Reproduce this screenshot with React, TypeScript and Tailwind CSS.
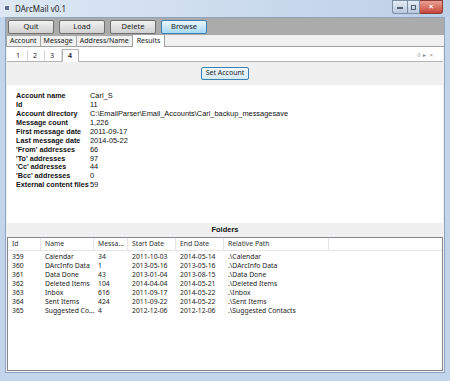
import React from "react";

const seg = { fontFamily: '"Noto Sans", "Open Sans", sans-serif' };
const ms = { fontFamily: '"Liberation Sans", Arial, sans-serif' };

const details: [string, string][] = [
  ["Account name", "Carl_S"],
  ["Id", "11"],
  ["Account directory", "C:\\EmailParser\\Email_Accounts\\Carl_backup_messagesave"],
  ["Message count", "1,226"],
  ["First message date", "2011-09-17"],
  ["Last message date", "2014-05-22"],
  ["'From' addresses", "66"],
  ["'To' addresses", "97"],
  ["'Cc' addresses", "44"],
  ["'Bcc' addresses", "0"],
  ["External content files", "59"],
];

const rows: string[][] = [
  ["359", "Calendar", "34", "2011-10-03", "2014-05-14", ".\\Calendar"],
  ["360", "DArcInfo Data", "1", "2013-05-16", "2013-05-16", ".\\DArcInfo Data"],
  ["361", "Data Done", "43", "2013-01-04", "2013-08-15", ".\\Data Done"],
  ["362", "Deleted Items", "104", "2014-04-04", "2014-05-21", ".\\Deleted Items"],
  ["363", "Inbox", "616", "2011-09-17", "2014-05-22", ".\\Inbox"],
  ["364", "Sent Items", "424", "2011-09-22", "2014-05-22", ".\\Sent Items"],
  ["365", "Suggested Co...", "4", "2012-12-06", "2012-12-06", ".\\Suggested Contacts"],
];

const cols = ["w-[33px]", "w-[53px]", "w-[34px]", "w-[48px]", "w-[48px]", "w-[105px]"];

function Btn({ label, active }: { label: string; active?: boolean }) {
  return (
    <div
      className={
        "w-[46px] h-[14px] flex items-center justify-center rounded-[2px] border text-[7.5px] text-[#222] " +
        (active
          ? "border-[#3c7fb1] bg-gradient-to-b from-[#eaf6fd] to-[#a7d9f5]"
          : "border-[#707070] bg-gradient-to-b from-[#f2f2f2] to-[#d0d0d0]")
      }
      style={seg}
    >
      {label}
    </div>
  );
}

export default function App() {
  return (
    <div className="w-[450px] h-[381px] overflow-hidden bg-[#c2d5eb] flex flex-col">
      {/* title bar */}
      <div className="h-[17px] flex items-start relative bg-gradient-to-r from-[#dde8f4] via-[#cddcee] to-[#bcd0e8]">
        <div className="mt-[5px] ml-[4px] w-[6px] h-[6px] bg-[#5a6d84] border border-[#e8eef6]" />
        <div className="ml-[5px] mt-[3px] text-[8px] text-[#1e1e1e]" style={seg}>
          DArcMail v0.1
        </div>
        <div className="ml-auto mr-[7px] flex h-[14px]">
          <div className="w-[15px] h-[14px] rounded-bl-[3px] border border-[#7f8fa3] border-r-0 bg-gradient-to-b from-[#e4ecf6] to-[#b7c8de] flex items-end justify-center pb-[4px]">
            <div className="w-[6px] h-[2px] bg-[#56616e]" />
          </div>
          <div className="w-[13px] h-[14px] border border-[#7f8fa3] bg-gradient-to-b from-[#e4ecf6] to-[#b7c8de] flex items-center justify-center">
            <div className="w-[5px] h-[5px] border border-[#56616e]" />
          </div>
          <div className="w-[23px] h-[14px] rounded-br-[3px] border border-[#8a3b33] border-l-0 bg-gradient-to-b from-[#e8a093] to-[#c7433a] flex items-center justify-center text-[8px] font-bold text-white" style={ms}>
            ×
          </div>
        </div>
      </div>

      {/* client */}
      <div className="mx-[5px] flex-1 flex flex-col bg-[#f0f0f0] border border-[#8ea3bd] min-h-0">
        {/* toolbar */}
        <div className="h-[17px] bg-[#ababab] flex items-center gap-[5px] pl-[2px] shrink-0">
          <Btn label="Quit" />
          <Btn label="Load" />
          <Btn label="Delete" />
          <Btn label="Browse" active />
        </div>
        {/* main tabs */}
        <div className="h-[12px] flex items-end pl-0 shrink-0 border-b border-[#a0a0a0] relative" style={seg}>
          {["Account", "Message", "Address/Name"].map((t) => (
            <div key={t} className="h-[11px] px-[3px] border border-b-0 border-[#a8a8a8] -ml-px first:ml-0 bg-[#f0f0f0] text-[7px] leading-[10px] text-[#222]">
              {t}
            </div>
          ))}
          <div className="h-[13px] px-[4px] border border-b-0 border-[#a0a0a0] -ml-px bg-white text-[7px] leading-[11px] text-[#222] relative top-px">
            Results
          </div>
        </div>
        {/* panel */}
        <div className="flex-1 bg-white flex flex-col min-h-0 mx-[1px] mb-[1px] pt-[2px]">
          {/* inner tabs */}
          <div className="h-[13px] flex items-end pl-[4px] pr-[10px] border-b border-[#b4b4b4] shrink-0" style={seg}>
            {["1", "2", "3"].map((t) => (
              <div key={t} className="w-[17px] h-[11px] border-r border-[#d8d8d8] text-[7px] leading-[11px] pl-[5px] text-[#222]">
                {t}
              </div>
            ))}
            <div className="w-[17px] h-[13px] border border-b-0 border-[#b4b4b4] bg-white text-[7px] leading-[12px] pl-[5px] text-[#222] font-semibold relative top-px">
              4
            </div>
            <div className="ml-auto flex gap-[3px] items-center h-[11px] text-[6px] text-[#888]" style={ms}>
              <span>◊</span>
              <span>▸</span>
              <span>×</span>
            </div>
          </div>
          {/* set account */}
          <div className="h-[23px] bg-[#f0f0f0] flex items-center justify-center shrink-0">
            <div className="w-[48px] h-[13px] border border-[#3c7fb1] rounded-[2px] bg-gradient-to-b from-[#f3f9fd] to-[#d4ebf8] flex items-center justify-center text-[7px] text-[#222]" style={seg}>
              Set Account
            </div>
          </div>
          {/* details */}
          <div className="h-[138px] pt-[6px] pl-[9px] shrink-0" style={ms}>
            {details.map(([k, v]) => (
              <div key={k} className="flex h-[8.95px] items-center text-[7.2px] leading-[9px] text-[#111]">
                <div className="w-[74px] font-bold whitespace-nowrap">{k}</div>
                <div className="whitespace-nowrap text-[7.4px]">{v}</div>
              </div>
            ))}
          </div>
          {/* folders header */}
          <div className="h-[14px] bg-[#f0f0f0] flex items-center justify-center text-[7.5px] font-bold text-[#111] shrink-0" style={ms}>
            Folders
          </div>
          {/* table */}
          <div className="flex-1 border border-[#828790] bg-white min-h-0" style={seg}>
            <div className="h-[13px] flex items-center border-b border-[#e5e5e5] text-[6.8px] text-[#333]">
              {["Id", "Name", "Messa...", "Start Date", "End Date", "Relative Path"].map((h, i) => (
                <div key={h} className={cols[i] + " h-full flex items-center pl-[4px] border-r border-[#e5e5e5] whitespace-nowrap"}>
                  {h}
                </div>
              ))}
            </div>
            <div className="pt-[2px]">
              {rows.map((r) => (
                <div key={r[0]} className="flex h-[8.9px] items-center text-[6.8px] text-[#222]">
                  {r.map((c, i) => (
                    <div key={i} className={cols[i] + " pl-[4px] whitespace-nowrap overflow-visible"}>
                      {c}
                    </div>
                  ))}
                </div>
              ))}
            </div>
          </div>
        </div>
      </div>
      {/* bottom frame */}
      <div className="h-[8px] shrink-0" />
    </div>
  );
}
